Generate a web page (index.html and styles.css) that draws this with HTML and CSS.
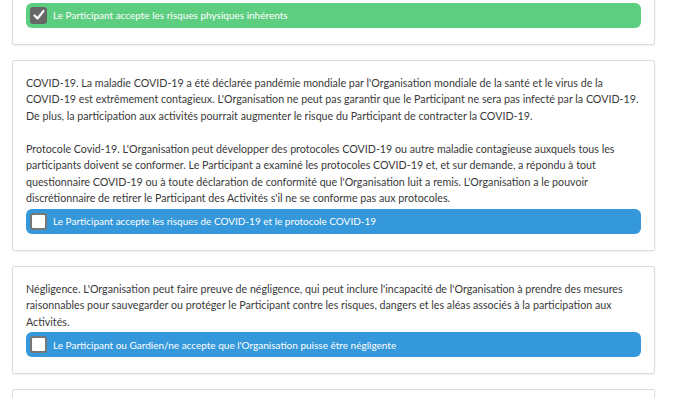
FILE: index.html
```html
<!DOCTYPE html>
<html lang="fr">

<head>
    <meta charset="UTF-8">
    <meta name="viewport" content="width=device-width, initial-scale=1.0">
    <title>Renonciation</title>
    <link rel="stylesheet" href="styles.css">
</head>

<body>
    <div class="page">
        <div class="card">
            <p>participer aux Activités peut comporter des risques physiques inhérents, y compris des blessures graves.</p>
            <label class="agree agree-ok">
                <span class="box checked">
                    <svg width="12" height="12" viewBox="0 0 12 12"><path d="M1.5 6.5 L4.5 9.5 L10.5 2" fill="none" stroke="#fff" stroke-width="2.2" stroke-linecap="round" stroke-linejoin="round"/></svg>
                </span>
                Le Participant accepte les risques physiques inhérents
            </label>
        </div>

        <div class="card">
            <p>COVID-19. La maladie COVID-19 a été déclarée pandémie mondiale par l'Organisation mondiale de la santé et le virus de la COVID-19 est extrêmement contagieux. L'Organisation ne peut pas garantir que le Participant ne sera pas infecté par la COVID-19. De plus, la participation aux activités pourrait augmenter le risque du Participant de contracter la COVID-19.</p>
            <p class="gap">Protocole Covid-19. L'Organisation peut développer des protocoles COVID-19 ou autre maladie contagieuse auxquels tous les participants doivent se conformer. Le Participant a examiné les protocoles COVID-19 et, et sur demande, a répondu à tout questionnaire COVID-19 ou à toute déclaration de conformité que l'Organisation luit a remis. L'Organisation a le pouvoir discrétionnaire de retirer le Participant des Activités s'il ne se conforme pas aux protocoles.</p>
            <label class="agree">
                <span class="box"></span>
                Le Participant accepte les risques de COVID-19 et le protocole COVID-19
            </label>
        </div>

        <div class="card">
            <p>Négligence. L'Organisation peut faire preuve de négligence, qui peut inclure l'incapacité de l'Organisation à prendre des mesures raisonnables pour sauvegarder ou protéger le Participant contre les risques, dangers et les aléas associés à la participation aux Activités.</p>
            <label class="agree">
                <span class="box"></span>
                Le Participant ou Gardien/ne accepte que l'Organisation puisse être négligente
            </label>
        </div>

        <div class="card">
            <p>Responsabilité.</p>
        </div>
    </div>
</body>

</html>
```

FILE: styles.css
```css
body {
    margin: 0;
    background: #fff;
    font-family: Lato, "Open Sans", sans-serif;
    color: #3a3a3a;
}

.page {
    margin-top: -31px;
    margin-left: 12px;
    width: 643px;
}

.card {
    border: 1px solid #dcdcdc;
    border-radius: 2px;
    box-shadow: 0 1px 2px rgba(0, 0, 0, 0.06);
    padding: 14px 13px 16px 13px;
    margin-bottom: 15px;
}

.card p {
    margin: 0;
    font-size: 10.7px;
    line-height: 16.5px;
}

.card p.gap {
    margin-top: 16.5px;
}

.agree {
    display: flex;
    align-items: center;
    height: 25px;
    margin-top: 2px;
    padding-left: 4px;
    border-radius: 6px;
    background: #3498db;
    color: #fff;
    font-size: 10px;
}

.agree-ok {
    background: #5dce7f;
}

.box {
    display: flex;
    align-items: center;
    justify-content: center;
    box-sizing: border-box;
    width: 17px;
    height: 17px;
    margin-right: 6px;
    border: 2px solid #777;
    border-radius: 3px;
    background: #fff;
}

.box.checked {
    background: #666;
    border-color: #666;
}
```
